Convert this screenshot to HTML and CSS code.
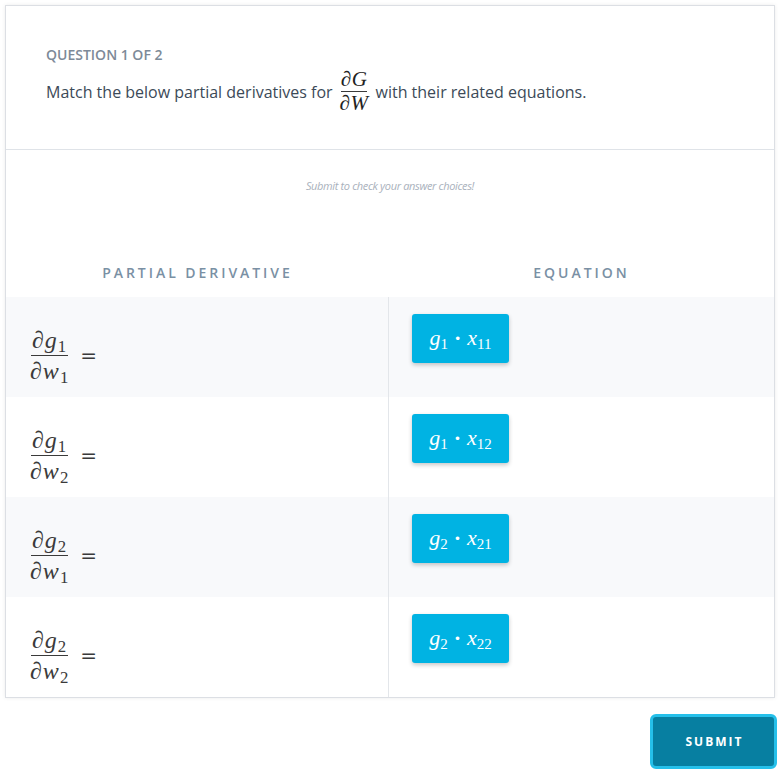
FILE: index.html
```html
<!DOCTYPE html>
<html>
<head>
<meta charset="utf-8">
<link rel="stylesheet" href="styles.css">
</head>
<body>
<div class="page">
  <div class="card">
    <div class="head">
      <div class="label">QUESTION 1 OF 2</div>
      <div class="question">
        <span>Match the below partial derivatives for</span>
        <span class="frac small">
          <span class="num"><span class="d">∂</span><i>G</i></span>
          <span class="den"><span class="d">∂</span><i>W</i></span>
        </span>
        <span>with their related equations.</span>
      </div>
    </div>
    <div class="feedback">Submit to check your answer choices!</div>
    <div class="table">
      <div class="th">PARTIAL DERIVATIVE</div>
      <div class="th">EQUATION</div>

      <div class="cell left shade">
        <span class="frac"><span class="num"><span class="d">∂</span><i>g</i><sub>1</sub></span><span class="den"><span class="d">∂</span><i>w</i><sub>1</sub></span></span><span class="eq">=</span>
      </div>
      <div class="cell right shade"><div class="chip"><span><i>g</i><sub>1</sub><span class="dot">·</span><i>x</i><sub>11</sub></span></div></div>

      <div class="cell left">
        <span class="frac"><span class="num"><span class="d">∂</span><i>g</i><sub>1</sub></span><span class="den"><span class="d">∂</span><i>w</i><sub>2</sub></span></span><span class="eq">=</span>
      </div>
      <div class="cell right"><div class="chip"><span><i>g</i><sub>1</sub><span class="dot">·</span><i>x</i><sub>12</sub></span></div></div>

      <div class="cell left shade">
        <span class="frac"><span class="num"><span class="d">∂</span><i>g</i><sub>2</sub></span><span class="den"><span class="d">∂</span><i>w</i><sub>1</sub></span></span><span class="eq">=</span>
      </div>
      <div class="cell right shade"><div class="chip"><span><i>g</i><sub>2</sub><span class="dot">·</span><i>x</i><sub>21</sub></span></div></div>

      <div class="cell left">
        <span class="frac"><span class="num"><span class="d">∂</span><i>g</i><sub>2</sub></span><span class="den"><span class="d">∂</span><i>w</i><sub>2</sub></span></span><span class="eq">=</span>
      </div>
      <div class="cell right"><div class="chip"><span><i>g</i><sub>2</sub><span class="dot">·</span><i>x</i><sub>22</sub></span></div></div>
    </div>
  </div>
  <div class="actions">
    <button class="submit">SUBMIT</button>
  </div>
</div>
</body>
</html>
```

FILE: styles.css
```css
html, body {
  margin: 0;
  padding: 0;
  background: #ffffff;
}
.page {
  padding: 5px 4px 0 5px;
  font-family: "Open Sans", "Liberation Sans", sans-serif;
}
.card {
  width: 768px;
  border: 1px solid #dcdfe4;
  box-shadow: 0 0 4px rgba(0, 0, 0, 0.08);
  background: #fff;
}
.head {
  padding: 39px 40px 0;
  height: 104px;
  border-bottom: 1px solid #dfe3e8;
}
.label {
  font-size: 14px;
  line-height: 19px;
  font-weight: 600;
  color: #7d8a98;
}
.question {
  margin-top: 5px;
  display: flex;
  align-items: center;
  gap: 6px;
  font-size: 16px;
  color: #3c4a58;
}
.frac {
  display: inline-flex;
  flex-direction: column;
  align-items: center;
  font-family: "Liberation Serif", "DejaVu Serif", serif;
  color: #3a3a3a;
  font-size: 24px;
  line-height: 1;
  letter-spacing: 1px;
}
.frac .num {
  padding: 0 1px 3px;
  border-bottom: 1.2px solid #3a3a3a;
}
.frac .den {
  padding: 3px 1px 0;
}
.frac sub {
  font-style: normal;
  font-size: 0.7em;
  vertical-align: -0.25em;
  line-height: 0;
}
.frac .d {
  font-style: italic;
}
.frac.small {
  font-size: 21px;
  color: #222;
  letter-spacing: 0.5px;
}
.frac.small .num {
  padding: 0 0 1px;
  border-bottom-width: 1px;
}
.frac.small .den {
  padding-top: 1px;
}
.feedback {
  margin-top: 29px;
  text-align: center;
  font-size: 11px;
  line-height: 14px;
  font-style: italic;
  color: #a9b1bc;
  letter-spacing: -0.35px;
}
.table {
  margin-top: 70px;
  display: grid;
  grid-template-columns: 383px 1fr;
}
.th {
  text-align: center;
  font-size: 14px;
  font-weight: 600;
  line-height: 19px;
  letter-spacing: 2.95px;
  color: #7a90a4;
  padding-bottom: 15px;
}
.cell {
  height: 100px;
  box-sizing: border-box;
}
.shade {
  background: #f8f9fb;
}
.left {
  padding: 31px 0 0 23px;
  display: flex;
  align-items: flex-start;
  border-right: 1px solid #e3e6ea;
}
.eq {
  font-family: "DejaVu Serif", serif;
  font-size: 20px;
  color: #3a3a3a;
  margin: 16px 0 0 10px;
}
.right {
  padding: 17px 0 0 23px;
}
.chip {
  width: 97px;
  height: 49px;
  box-sizing: border-box;
  background: #00b3e3;
  border-radius: 3px;
  box-shadow: 0 2px 4px rgba(0, 0, 0, 0.22);
  color: #fff;
  font-family: "Liberation Serif", "DejaVu Serif", serif;
  font-size: 22px;
  display: flex;
  align-items: center;
  justify-content: center;
  padding-bottom: 2px;
}
.chip sub {
  font-style: normal;
  font-size: 0.68em;
  vertical-align: -0.3em;
  line-height: 0;
}
.chip .dot {
  font-style: normal;
  margin: 0 6px;
  font-weight: bold;
}
.actions {
  display: flex;
  justify-content: flex-end;
  padding-top: 16px;
}
.submit {
  width: 127px;
  height: 55px;
  background: #077fa1;
  border: 3px solid #25c0ea;
  border-radius: 6px;
  color: #fff;
  font-family: "Open Sans", "Liberation Sans", sans-serif;
  font-size: 12px;
  font-weight: 700;
  letter-spacing: 2px;
  padding: 0 0 0 2px;
}
```
